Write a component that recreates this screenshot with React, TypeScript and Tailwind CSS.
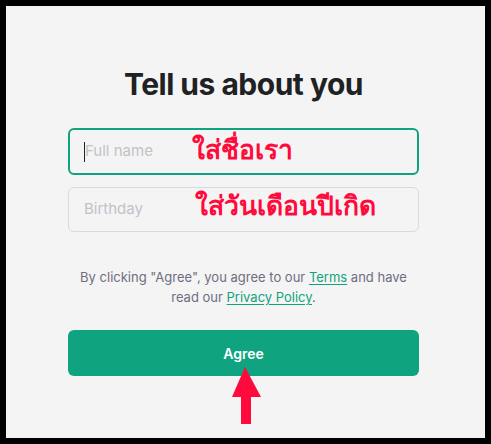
export default function App() {
  return (
    <div className="w-[491px] h-[444px] bg-black p-[6px]" style={{ fontFamily: "Inter, 'Liberation Sans', sans-serif" }}>
      <div className="relative w-[479px] h-[432px] bg-[#f4f4f4] pl-[62px] pt-[58px]">
        <div className="w-[351px] flex flex-col">
          <h1 className="text-center text-[30px] leading-[40px] font-bold tracking-[-0.5px] text-[#202123]">
            Tell us about you
          </h1>

          <div className="relative mt-[24px] h-[47px] rounded-[6px] border-2 border-[#10a37f] flex items-center pl-[14px]">
            <span className="w-px h-[20px] bg-[#202123]" />
            <span className="text-[15px] text-[#c2c2c8]">Full name</span>
            <span className="absolute left-[122px] top-[1px] text-[26.5px] font-bold text-[#ff0a3c] leading-[36px]">
              ใส่ชื่อเรา
            </span>
          </div>

          <div className="relative mt-[12px] h-[45px] rounded-[6px] border border-[#d9d9e3] flex items-center pl-[15px]">
            <span className="text-[15px] text-[#c2c2c8]">Birthday</span>
            <span className="absolute left-[126px] top-[-1px] text-[26.5px] font-bold text-[#ff0a3c] leading-[36px]">
              ใส่วันเดือนปีเกิด
            </span>
          </div>

          <p className="mt-[35px] text-center text-[13px] leading-[20px] text-[#6e6e80] px-[10px]">
            By clicking "Agree", you agree to our{" "}
            <a className="text-[#10a37f] underline underline-offset-2">Terms</a> and have read our{" "}
            <a className="text-[#10a37f] underline underline-offset-2">Privacy Policy</a>.
          </p>

          <button className="mt-[23px] h-[46px] rounded-[6px] bg-[#10a37f] text-white text-[14px] font-semibold">
            Agree
          </button>
        </div>

        <svg className="absolute left-[226px] top-[361px]" width="30" height="58" viewBox="0 0 30 58">
          <polygon points="13,0 0,30 9,30 9,57 19,57 19,30 29,30" fill="#ff0a3c" />
        </svg>
      </div>
    </div>
  );
}
